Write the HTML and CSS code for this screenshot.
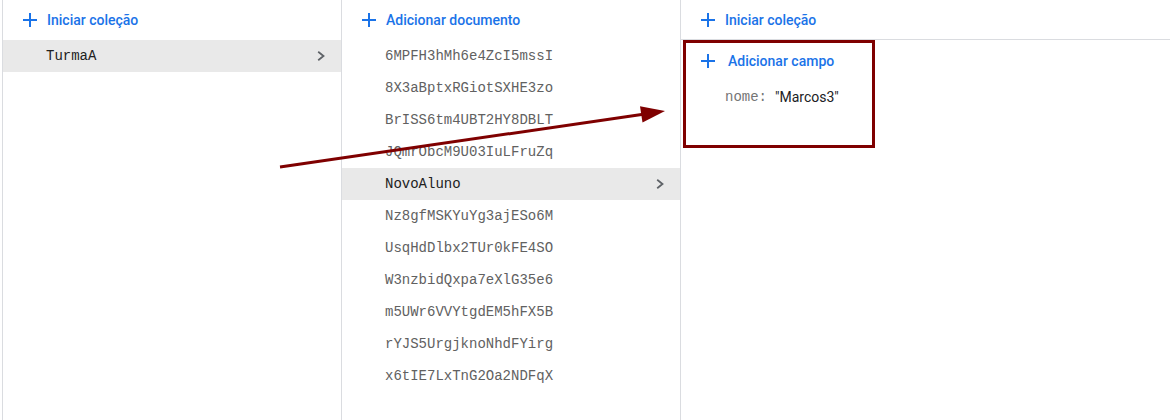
FILE: index.html
```html
<!DOCTYPE html>
<html lang="pt">
<head>
<meta charset="utf-8">
<title>Firestore</title>
<link rel="stylesheet" href="styles.css">
</head>
<body>
<div class="panel">
  <section class="col col-collections">
    <div class="col-head">
      <button class="add">
        <svg class="plus" viewBox="0 0 14 14"><path d="M6 0h2v6h6v2H8v6H6V8H0V6h6z"/></svg>
        <span>Iniciar coleção</span>
      </button>
    </div>
    <ul class="list">
      <li class="item selected"><span class="name">TurmaA</span><svg class="chev" viewBox="0 0 8 10"><path d="M1.2 0.7 6.5 5 1.2 9.3"/></svg></li>
    </ul>
  </section>
  <section class="col col-docs">
    <div class="col-head">
      <button class="add">
        <svg class="plus" viewBox="0 0 14 14"><path d="M6 0h2v6h6v2H8v6H6V8H0V6h6z"/></svg>
        <span>Adicionar documento</span>
      </button>
    </div>
    <ul class="list">
      <li class="item"><span class="id">6MPFH3hMh6e4ZcI5mssI</span></li>
      <li class="item"><span class="id">8X3aBptxRGiotSXHE3zo</span></li>
      <li class="item"><span class="id">BrISS6tm4UBT2HY8DBLT</span></li>
      <li class="item"><span class="id">JQmrObcM9U03IuLFruZq</span></li>
      <li class="item selected"><span class="name">NovoAluno</span><svg class="chev" viewBox="0 0 8 10"><path d="M1.2 0.7 6.5 5 1.2 9.3"/></svg></li>
      <li class="item"><span class="id">Nz8gfMSKYuYg3ajESo6M</span></li>
      <li class="item"><span class="id">UsqHdDlbx2TUr0kFE4SO</span></li>
      <li class="item"><span class="id">W3nzbidQxpa7eXlG35e6</span></li>
      <li class="item"><span class="id">m5UWr6VVYtgdEM5hFX5B</span></li>
      <li class="item"><span class="id">rYJS5UrgjknoNhdFYirg</span></li>
      <li class="item"><span class="id">x6tIE7LxTnG2Oa2NDFqX</span></li>
    </ul>
  </section>
  <section class="col col-fields">
    <div class="col-head bordered">
      <button class="add">
        <svg class="plus" viewBox="0 0 14 14"><path d="M6 0h2v6h6v2H8v6H6V8H0V6h6z"/></svg>
        <span>Iniciar coleção</span>
      </button>
    </div>
    <div class="field-add">
      <button class="add wide">
        <svg class="plus" viewBox="0 0 14 14"><path d="M6 0h2v6h6v2H8v6H6V8H0V6h6z"/></svg>
        <span>Adicionar campo</span>
      </button>
    </div>
    <div class="field">
      <span class="key">nome:</span>
      <span class="value">"Marcos3"</span>
    </div>
  </section>
</div>

<div class="highlight-box"></div>
<svg class="arrow" width="1170" height="420" viewBox="0 0 1170 420">
  <line x1="280" y1="167" x2="645" y2="114" />
  <polygon points="665,111 640,106.3 642.5,122.5" />
</svg>
</body>
</html>
```

FILE: styles.css
```css
* { box-sizing: border-box; }

html, body {
  margin: 0;
  padding: 0;
  background: #ffffff;
}

body {
  width: 1170px;
  height: 420px;
  position: relative;
  overflow: hidden;
  font-family: Roboto, "Liberation Sans", sans-serif;
  font-size: 14px;
  color: #202124;
}

.panel {
  display: flex;
  height: 420px;
  margin-left: 2px;
  border-left: 1px solid #dadce0;
}

.col {
  display: flex;
  flex-direction: column;
}

.col-collections,
.col-docs {
  width: 339px;
  border-right: 1px solid #dadce0;
}

.col-fields {
  flex: 1;
}

.col-head {
  height: 40px;
  display: flex;
  align-items: center;
  padding-left: 20px;
}

.col-head.bordered {
  border-bottom: 1px solid #dadce0;
}

.add {
  display: flex;
  align-items: center;
  gap: 10px;
  padding: 0;
  border: 0;
  background: none;
  font-family: Roboto, "Liberation Sans", sans-serif;
  font-size: 14px;
  font-weight: 500;
  color: #1a73e8;
  cursor: pointer;
}

.add.wide {
  gap: 13px;
}

.plus {
  width: 14px;
  height: 14px;
  fill: #1a73e8;
  flex: none;
}

.list {
  list-style: none;
  margin: 0;
  padding: 0;
}

.item {
  height: 32px;
  display: flex;
  align-items: center;
  justify-content: space-between;
  padding: 0 16px 0 43px;
  font-family: "Liberation Mono", "DejaVu Sans Mono", monospace;
  font-size: 14px;
}

.item.selected {
  background: #e9e9e9;
}

.id {
  color: #616161;
}

.name {
  color: #212121;
}

.chev {
  width: 8px;
  height: 10px;
  fill: none;
  stroke: #5f6368;
  stroke-width: 1.8;
}

.field-add {
  height: 42px;
  display: flex;
  align-items: center;
  padding-left: 20px;
}

.field {
  height: 30px;
  display: flex;
  align-items: center;
  padding-left: 44px;
}

.key {
  font-family: "Liberation Mono", "DejaVu Sans Mono", monospace;
  color: #757575;
  margin-right: 8px;
}

.value {
  color: #202124;
}

.highlight-box {
  position: absolute;
  left: 683px;
  top: 40px;
  width: 192px;
  height: 108px;
  border: 3px solid #7f0000;
  pointer-events: none;
}

.arrow {
  position: absolute;
  left: 0;
  top: 0;
  pointer-events: none;
}

.arrow line {
  stroke: #7f0000;
  stroke-width: 3;
}

.arrow polygon {
  fill: #7f0000;
}
```
